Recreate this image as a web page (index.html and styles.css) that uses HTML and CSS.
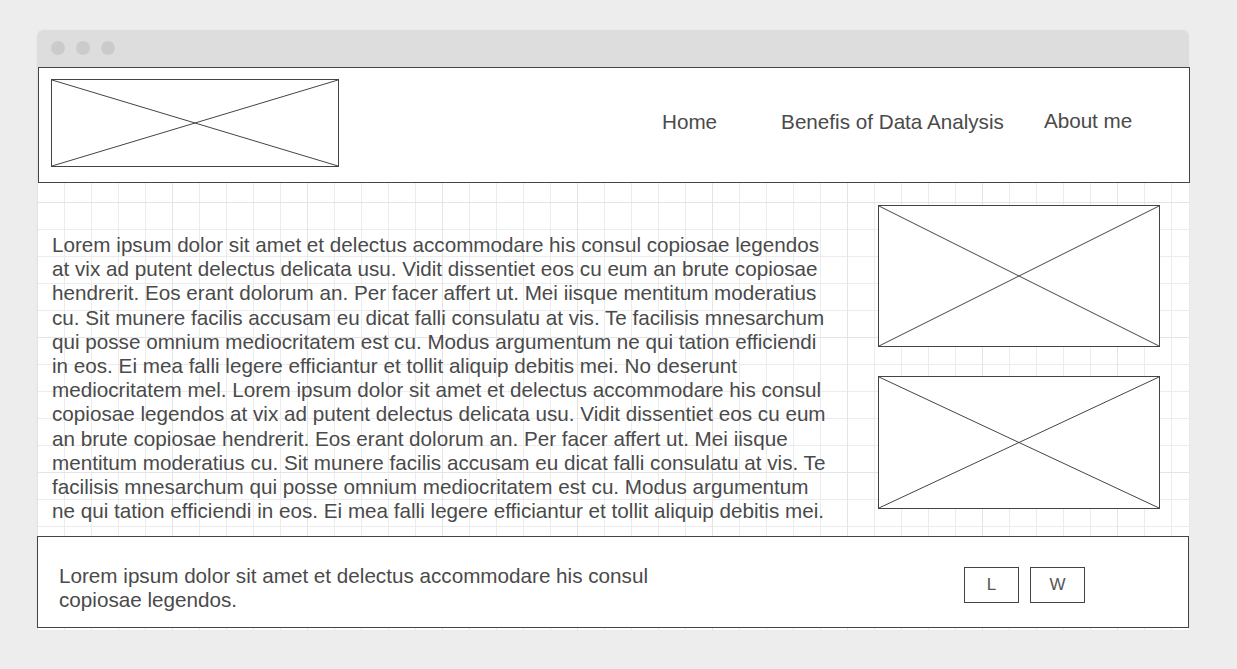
FILE: index.html
```html
<!DOCTYPE html>
<html>
<head>
<meta charset="utf-8">
<title>Wireframe</title>
<link rel="stylesheet" href="styles.css">
</head>
<body>
<div class="window">
  <div class="titlebar">
    <span class="dot"></span><span class="dot"></span><span class="dot"></span>
  </div>
  <div class="page">
    <header class="header">
      <div class="ph logo">
        <svg viewBox="0 0 100 100" preserveAspectRatio="none"><line x1="0" y1="0" x2="100" y2="100" vector-effect="non-scaling-stroke"/><line x1="0" y1="100" x2="100" y2="0" vector-effect="non-scaling-stroke"/></svg>
      </div>
      <nav class="nav">
        <a class="nav-item nav-home">Home</a>
        <a class="nav-item nav-benefits">Benefis of Data Analysis</a>
        <a class="nav-item nav-about">About me</a>
      </nav>
    </header>
    <main class="main">
      <p class="text">Lorem ipsum dolor sit amet et delectus accommodare his consul copiosae legendos at vix ad putent delectus delicata usu. Vidit dissentiet eos cu eum an brute copiosae hendrerit. Eos erant dolorum an. Per facer affert ut. Mei iisque mentitum moderatius cu. Sit munere facilis accusam eu dicat falli consulatu at vis. Te facilisis mnesarchum qui posse omnium mediocritatem est cu. Modus argumentum ne qui tation efficiendi in eos. Ei mea falli legere efficiantur et tollit aliquip debitis mei. No deserunt mediocritatem mel. Lorem ipsum dolor sit amet et delectus accommodare his consul copiosae legendos at vix ad putent delectus delicata usu. Vidit dissentiet eos cu eum an brute copiosae hendrerit. Eos erant dolorum an. Per facer affert ut. Mei iisque mentitum moderatius cu. Sit munere facilis accusam eu dicat falli consulatu at vis. Te facilisis mnesarchum qui posse omnium mediocritatem est cu. Modus argumentum ne qui tation efficiendi in eos. Ei mea falli legere efficiantur et tollit aliquip debitis mei.</p>
      <aside class="side">
        <div class="ph img1">
          <svg viewBox="0 0 100 100" preserveAspectRatio="none"><line x1="0" y1="0" x2="100" y2="100" vector-effect="non-scaling-stroke"/><line x1="0" y1="100" x2="100" y2="0" vector-effect="non-scaling-stroke"/></svg>
        </div>
        <div class="ph img2">
          <svg viewBox="0 0 100 100" preserveAspectRatio="none"><line x1="0" y1="0" x2="100" y2="100" vector-effect="non-scaling-stroke"/><line x1="0" y1="100" x2="100" y2="0" vector-effect="non-scaling-stroke"/></svg>
        </div>
      </aside>
    </main>
    <footer class="footer">
      <p class="footer-text">Lorem ipsum dolor sit amet et delectus accommodare his consul copiosae legendos.</p>
      <div class="buttons">
        <span class="btn">L</span>
        <span class="btn">W</span>
      </div>
    </footer>
  </div>
</div>
</body>
</html>
```
FILE: styles.css
```css
html, body {
  margin: 0;
  padding: 0;
}
body {
  background: #ededed;
  font-family: "Liberation Sans", Arial, sans-serif;
  color: #4a4a4a;
  height: 669px;
  overflow: hidden;
}
.window {
  margin: 30px 0 0 37px;
  width: 1152px;
  border-radius: 6px 6px 0 0;
  box-shadow: 0 0 2px rgba(0,0,0,0.06);
  background: #fff;
}
.titlebar {
  height: 37px;
  background: #dddddd;
  border-radius: 6px 6px 0 0;
  display: flex;
  align-items: center;
  gap: 11px;
  padding-left: 14px;
  box-sizing: border-box;
  padding-bottom: 1px;
}
.dot {
  width: 14px;
  height: 14px;
  border-radius: 50%;
  background: #cbcbcb;
}
.page {
  background-color: #fff;
  background-image:
    linear-gradient(to right, #e4e4e4 1px, transparent 1px),
    linear-gradient(to bottom, #e4e4e4 1px, transparent 1px),
    linear-gradient(to right, #ececec 1px, transparent 1px),
    linear-gradient(to bottom, #ececec 1px, transparent 1px);
  background-size: 135px 135px, 135px 135px, 27px 27px, 27px 27px;
  background-position: 0 0;
  padding-bottom: 2px;
}
.header {
  height: 116px;
  box-sizing: border-box;
  border: 1px solid #444;
  background: #fff;
  margin-left: 1px;
  margin-right: -1px;
  display: flex;
  align-items: flex-start;
  padding: 11px 0 0 12px;
}
.ph {
  border: 1px solid #444;
  box-sizing: border-box;
  background: #fff;
}
.ph svg {
  display: block;
  width: 100%;
  height: 100%;
}
.ph line {
  stroke: #444;
  stroke-width: 1;
}
.logo {
  width: 288px;
  height: 88px;
}
.nav {
  display: flex;
  margin-left: 323px;
  margin-top: 31px;
  font-size: 20.66px;
  line-height: 23px;
}
.nav-item {
  color: #4a4a4a;
}
.nav-benefits {
  margin-left: 64px;
}
.nav-about {
  margin-left: 40px;
  margin-top: -1px;
}
.main {
  display: flex;
  justify-content: space-between;
  padding: 0 29px 0 15px;
  height: 353px;
}
.text {
  margin: 50px 0 0 0;
  width: 785px;
  font-size: 20.66px;
  line-height: 24.2px;
}
.side {
  margin-top: 22px;
  display: flex;
  flex-direction: column;
  gap: 29px;
}
.img1 {
  width: 282px;
  height: 142px;
}
.img2 {
  width: 282px;
  height: 133px;
}
.footer {
  height: 92px;
  box-sizing: border-box;
  border: 1px solid #444;
  background: #fff;
  display: flex;
  align-items: center;
  justify-content: space-between;
  padding: 0 103px 0 21px;
}
.footer-text {
  margin: 12px 0 0 0;
  width: 620px;
  font-size: 20.66px;
  line-height: 24px;
}
.buttons {
  display: flex;
  gap: 11px;
  margin-top: 6px;
}
.btn {
  width: 55px;
  height: 36px;
  box-sizing: border-box;
  border: 1px solid #444;
  display: flex;
  align-items: center;
  justify-content: center;
  font-size: 17px;
  color: #555;
}
```
